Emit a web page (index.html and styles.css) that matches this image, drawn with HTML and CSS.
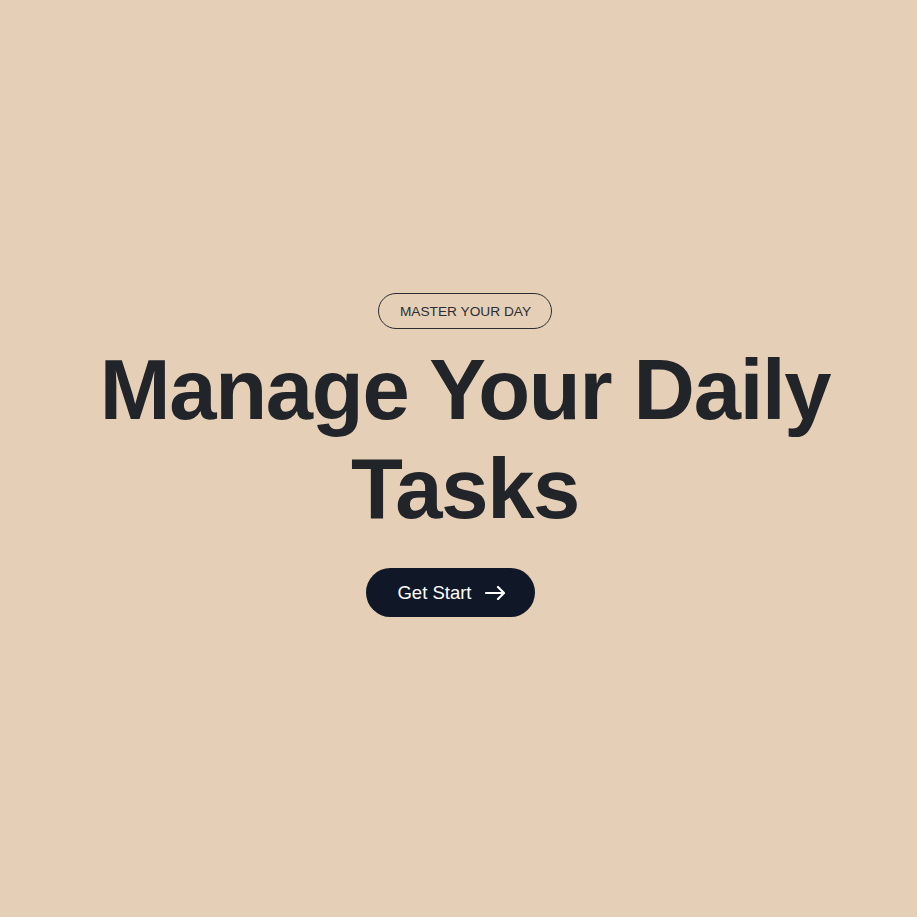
FILE: index.html
```html
<!DOCTYPE html>
<html lang="en">
<head>
<meta charset="utf-8">
<title>Manage Your Daily Tasks</title>
<link rel="stylesheet" href="styles.css">
</head>
<body>
<main class="hero">
  <span class="badge">MASTER YOUR DAY</span>
  <h1 class="title">Manage Your Daily<br>Tasks</h1>
  <button class="cta" type="button">
    <span>Get Start</span>
    <svg class="arrow" width="20" height="14" viewBox="0 0 20 14" fill="none" stroke="currentColor" stroke-width="2.2" stroke-linecap="round" stroke-linejoin="round"><path d="M1 7H19M13 1L19 7L13 13"/></svg>
  </button>
</main>
</body>
</html>
```
FILE: styles.css
```css
* { box-sizing: border-box; }
html, body { margin: 0; padding: 0; }
body {
  background: #e5cfb6;
  font-family: "Liberation Sans", Arial, sans-serif;
  color: #212429;
}
.hero {
  min-height: 917px;
  display: flex;
  flex-direction: column;
  align-items: center;
  justify-content: center;
  padding: 0 0 7px 13px;
}
.badge {
  display: inline-flex;
  align-items: center;
  height: 36px;
  padding: 0 20px 0 21px;
  border: 1px solid #2b2d33;
  border-radius: 999px;
  font-size: 13.7px;
  color: #2b2d33;
}
.title {
  margin: 11px 0 30px;
  font-size: 85px;
  line-height: 99px;
  font-weight: 700;
  letter-spacing: -1.3px;
  text-align: center;
  color: #212429;
}
.cta {
  display: inline-flex;
  align-items: center;
  gap: 13px;
  height: 49px;
  padding: 0 30px 0 31px;
  margin-right: 29px;
  border: 0;
  border-radius: 999px;
  background: #101828;
  color: #ffffff;
  font-family: "Liberation Sans", Arial, sans-serif;
  font-size: 18.5px;
}
.arrow { display: block; margin-top: 1px; }
```
